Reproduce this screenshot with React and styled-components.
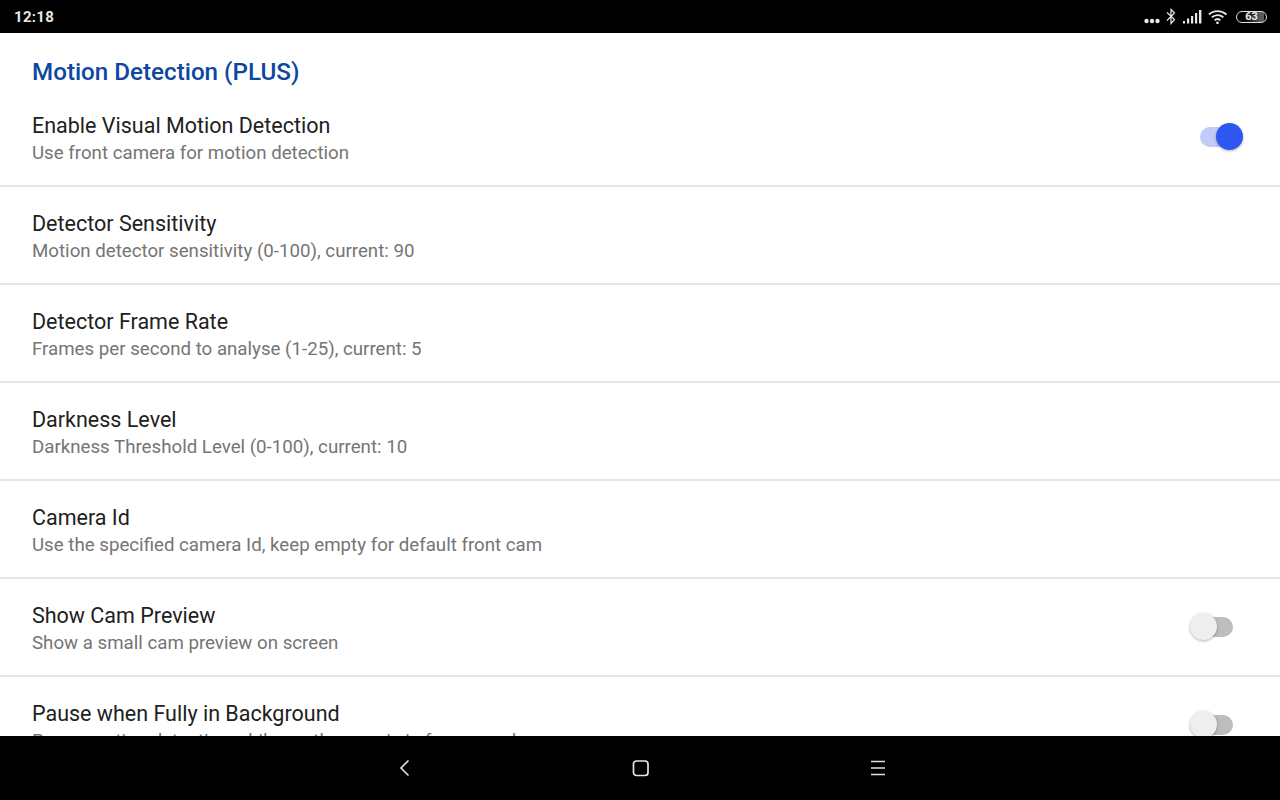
import React from "react";
import styled, { createGlobalStyle } from "styled-components";

const GlobalStyle = createGlobalStyle`
html, body {
  margin: 0;
  padding: 0;
  background: #000;
}
body {
  font-family: Roboto, "Liberation Sans", sans-serif;
}
`;

const Screen = styled.div`
width: 1280px;
height: 800px;
display: flex;
flex-direction: column;
overflow: hidden;
background: #fff;
`;

const StatusBar = styled.div`
height: 33px;
flex: none;
background: #000;
color: #e8e8e8;
display: flex;
align-items: center;
justify-content: space-between;
padding: 0 13px 0 14px;
`;

const Clock = styled.span`
font-size: 15px;
font-weight: 700;
letter-spacing: 0.3px;
`;

const StatusIcons = styled.div`
display: flex;
align-items: center;
gap: 6px;
`;

const Dots = styled.svg`
margin-top: 9px;
`;

const Bluetooth = styled.svg`
margin-right: 1px;
`;

const Battery = styled.div`
width: 29px;
height: 10px;
margin-left: 2px;
border: 1.5px solid #e0e0e0;
border-radius: 7px;
font-size: 11px;
font-weight: 700;
line-height: 10px;
text-align: center;
color: #e8e8e8;
background: linear-gradient(90deg, transparent 25%, #5a5a5a 80%, #5a5a5a 92%, transparent 92%);
`;

const Content = styled.main`
flex: 1;
min-height: 0;
overflow: hidden;
`;

const SectionTitle = styled.h2`
margin: 0;
height: 74px;
padding: 24px 0 0 32px;
box-sizing: border-box;
font-size: 24.2px;
line-height: 30px;
font-weight: 500;
color: #0d47a1;
`;

const Row = styled.div`
height: ${(p) => (p.$first ? "80px" : "98px")};
box-sizing: border-box;
padding: ${(p) => (p.$first ? "5px" : "23px")} 36px 0 32px;
border-bottom: 2px solid #e6e6e6;
display: flex;
align-items: flex-start;
justify-content: space-between;
`;

const RowText = styled.div`
display: flex;
flex-direction: column;
`;

const RowTitle = styled.div`
font-size: 21.5px;
line-height: 28px;
color: #212121;
`;

const RowSub = styled.div`
font-size: 18.7px;
line-height: 26px;
color: #757575;
`;

const Switch = styled.div`
position: relative;
width: 43px;
height: 20px;
margin-top: ${(p) => (p.$on ? "15px" : "15px")};
margin-right: ${(p) => (p.$on ? "1px" : "11px")};
`;

const Track = styled.div`
position: absolute;
top: 0;
left: 0;
right: 0;
bottom: 0;
border-radius: 10px;
background: ${(p) => (p.$on ? "#c2cbf8" : "#bdbdbd")};
`;

const Thumb = styled.div`
position: absolute;
top: -4px;
${(p) => (p.$on ? "right: 0;" : "left: 0;")}
width: 27px;
height: 27px;
border-radius: 50%;
background: ${(p) => (p.$on ? "#2e56f0" : "#eeeeee")};
box-shadow: 0 1px 3px rgba(0, 0, 0, 0.3);
`;

const NavBar = styled.nav`
height: 64px;
flex: none;
background: #000;
display: grid;
grid-template-columns: 24px 24px 24px;
justify-content: center;
column-gap: 212px;
align-items: center;
padding-left: 2px;
`;

const rows = [
  { title: "Detector Sensitivity", sub: "Motion detector sensitivity (0-100), current: 90" },
  { title: "Detector Frame Rate", sub: "Frames per second to analyse (1-25), current: 5" },
  { title: "Darkness Level", sub: "Darkness Threshold Level (0-100), current: 10" },
  { title: "Camera Id", sub: "Use the specified camera Id, keep empty for default front cam" },
  { title: "Show Cam Preview", sub: "Show a small cam preview on screen", toggle: true },
  { title: "Pause when Fully in Background", sub: "Pause motion detection while another app is in foreground", toggle: true },
];

function Toggle({ on }) {
  return (
    <Switch $on={on}>
      <Track $on={on} />
      <Thumb $on={on} />
    </Switch>
  );
}

export default function App() {
  return (
    <Screen>
      <GlobalStyle />
      <StatusBar>
        <Clock>12:18</Clock>
        <StatusIcons>
          <Dots width="16" height="6" viewBox="0 0 16 6" fill="#e8e8e8">
            <circle cx="2.5" cy="3" r="2.2" />
            <circle cx="8" cy="3" r="2.2" />
            <circle cx="13.5" cy="3" r="2.2" />
          </Dots>
          <Bluetooth width="10" height="17" viewBox="0 0 10 17" fill="none" stroke="#e8e8e8" strokeWidth="1.2">
            <path d="M1 4.5 8.5 11.5 5 15.5V1.5L8.5 5 1 12.5" />
          </Bluetooth>
          <svg width="19" height="16" viewBox="0 0 19 16" fill="#e8e8e8">
            <rect x="0" y="12" width="2" height="2.5" />
            <rect x="4" y="9.5" width="2.2" height="5" />
            <rect x="8" y="7" width="2.2" height="7.5" />
            <rect x="12" y="4" width="2.2" height="10.5" />
            <rect x="16" y="1" width="2.4" height="13.5" />
          </svg>
          <svg width="20" height="16" viewBox="0 0 20 16" fill="none" stroke="#e8e8e8" strokeWidth="1.9">
            <path d="M1 5.5C5.8 1 13.2 1 18.5 5.5" />
            <path d="M3.8 8.4C7 5.4 12 5.4 15.4 8.4" />
            <path d="M6.6 11.2C8.4 9.6 10.6 9.6 12.4 11.2" />
            <circle cx="9.5" cy="13.8" r="1.4" fill="#e8e8e8" stroke="none" />
          </svg>
          <Battery>63</Battery>
        </StatusIcons>
      </StatusBar>
      <Content>
        <SectionTitle>Motion Detection (PLUS)</SectionTitle>
        <Row $first>
          <RowText>
            <RowTitle>Enable Visual Motion Detection</RowTitle>
            <RowSub>Use front camera for motion detection</RowSub>
          </RowText>
          <Toggle on />
        </Row>
        {rows.map((r) => (
          <Row key={r.title}>
            <RowText>
              <RowTitle>{r.title}</RowTitle>
              <RowSub>{r.sub}</RowSub>
            </RowText>
            {r.toggle && <Toggle />}
          </Row>
        ))}
      </Content>
      <NavBar>
        <svg width="24" height="24" viewBox="0 0 24 24" fill="none" stroke="#e6e6e6" strokeWidth="1.6">
          <path d="M15.5 4.5 8 12l7.5 7.5" />
        </svg>
        <svg width="24" height="24" viewBox="0 0 24 24" fill="none" stroke="#e6e6e6" strokeWidth="1.7">
          <rect x="4.5" y="5" width="14.5" height="14.5" rx="3" />
        </svg>
        <svg width="24" height="24" viewBox="0 0 24 24" fill="none" stroke="#e0e0e0" strokeWidth="1.6">
          <path d="M6 5.5h14M6 12h14M6 18.5h14" />
        </svg>
      </NavBar>
    </Screen>
  );
}
